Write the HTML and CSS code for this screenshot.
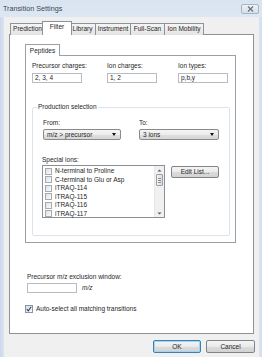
FILE: index.html
```html
<!DOCTYPE html>
<html>
<head>
<meta charset="utf-8">
<link rel="stylesheet" href="styles.css">
</head>
<body>
<div class="window">
  <div class="titlebar">
    <span class="title">Transition Settings</span>
    <span class="close"><svg width="7" height="6" viewBox="0 0 7 6"><path d="M1 0.5 L6 5.5 M6 0.5 L1 5.5" stroke="#6a7585" stroke-width="1.3"/></svg></span>
  </div>
  <div class="client">
    <div class="tabs">
      <div class="tab t-pred">Prediction</div>
      <div class="tab t-filter active">Filter</div>
      <div class="tab t-lib">Library</div>
      <div class="tab t-inst">Instrument</div>
      <div class="tab t-full">Full-Scan</div>
      <div class="tab t-ion">Ion Mobility</div>
    </div>
    <div class="panel">
      <div class="subtabs"><div class="subtab">Peptides</div></div>
      <div class="group">
        <div class="row3">
          <div class="field f1"><div class="lbl">Precursor charges:</div><div class="input">2, 3, 4</div></div>
          <div class="field f2"><div class="lbl">Ion charges:</div><div class="input">1, 2</div></div>
          <div class="field f3"><div class="lbl">Ion types:</div><div class="input">p,b,y</div></div>
        </div>
        <fieldset class="fs">
          <legend>Production selection</legend>
          <div class="row2">
            <div class="col c1"><div class="lbl">From:</div><div class="combo"><span>m/z &gt; precursor</span><i class="arrow"></i></div></div>
            <div class="col c2"><div class="lbl">To:</div><div class="combo"><span>3 ions</span><i class="arrow"></i></div></div>
          </div>
          <div class="lbl sp">Special ions:</div>
          <div class="listrow">
            <div class="listbox">
              <div class="items">
                <div class="item"><span class="cb"></span>N-terminal to Proline</div>
                <div class="item"><span class="cb"></span>C-terminal to Glu or Asp</div>
                <div class="item"><span class="cb"></span>iTRAQ-114</div>
                <div class="item"><span class="cb"></span>iTRAQ-115</div>
                <div class="item"><span class="cb"></span>iTRAQ-116</div>
                <div class="item"><span class="cb"></span>iTRAQ-117</div>
              </div>
              <div class="scroll">
                <svg class="sa" width="9" height="7" viewBox="0 0 9 7"><path d="M2.5 4.5 L4.5 2.5 L6.5 4.5Z" fill="#555"/></svg>
                <div class="thumb"><i></i><i></i><i></i></div>
                <div class="sfill"></div>
                <svg class="sa" width="9" height="7" viewBox="0 0 9 7"><path d="M2.5 2.5 L4.5 4.5 L6.5 2.5Z" fill="#555"/></svg>
              </div>
            </div>
            <div class="btn editbtn">Edit List...</div>
          </div>
        </fieldset>
      </div>
      <div class="lbl excl">Precursor m/z exclusion window:</div>
      <div class="exrow"><div class="input exin"></div><span class="unit">m/z</span></div>
      <div class="chkrow"><span class="chk"><svg width="6" height="6" viewBox="0 0 6 6"><path d="M0.8 3.2 L2.3 4.8 L5.2 0.8" stroke="#2a3f7a" stroke-width="1.1" fill="none"/></svg></span><span>Auto-select all matching transitions</span></div>
    </div>
    <div class="buttons">
      <div class="btn okbtn">OK</div>
      <div class="btn cancelbtn">Cancel</div>
    </div>
  </div>
</div>
</body>
</html>
```

FILE: styles.css
```css
* { box-sizing: border-box; }
html, body { margin: 0; padding: 0; }
body {
  font-family: "Liberation Sans", Arial, sans-serif;
  font-size: 6.5px;
  line-height: 8px;
  color: #262626;
}
.window {
  width: 262px;
  height: 357px;
  background: linear-gradient(90deg, #c9d8eb 0, #dbe5f1 4px, #dbe5f1 258px, #d3dfed 262px);
  display: flex;
  flex-direction: column;
  overflow: hidden;
}
.titlebar {
  height: 17px;
  flex: none;
  display: flex;
  align-items: center;
  padding-left: 3px;
  background: linear-gradient(#d9e4f1, #dde7f3);
  position: relative;
}
.title { font-size: 7.2px; color: #3b4756; }
.close {
  position: absolute;
  left: 241px;
  top: 4px;
  width: 18px;
  height: 10px;
  border: 1px solid #a8b4c4;
  border-radius: 2px;
  background: linear-gradient(#eef2f7, #d6dfe9);
  display: flex;
  align-items: center;
  justify-content: center;
}
.client {
  flex: 1;
  margin: 0 3px 0 4px;
  background: #f0f0f0;
  padding: 4px 5px 0 5px;
  display: flex;
  flex-direction: column;
}
.tabs {
  display: flex;
  align-items: flex-end;
  height: 14px;
  padding-left: 1px;
  position: relative;
  z-index: 1;
  margin-bottom: -1px;
}
.tab {
  height: 12px;
  border: 1px solid #8e9299;
  border-bottom: none;
  background: linear-gradient(#f4f4f4, #e4e4e4);
  display: flex;
  align-items: center;
  justify-content: center;
  margin-right: -1px;
  white-space: nowrap;
  padding-bottom: 1px;
}
.t-pred { width: 35px; }
.t-filter { width: 26px; }
.t-lib { width: 27px; }
.t-inst { width: 36px; }
.t-full { width: 35px; }
.t-ion { width: 40px; }
.tab.active {
  height: 14px;
  background: #fff;
  width: 30px;
  margin: 0 -3px 0 -2px;
  position: relative;
  z-index: 2;
  padding-bottom: 3px;
}
.panel {
  height: 300px;
  background: #fff;
  border: 1px solid #8e9299;
  padding: 9px 0 0 15px;
  display: flex;
  flex-direction: column;
}
.subtabs { display: flex; height: 11px; position: relative; z-index: 1; }
.subtab {
  width: 35px;
  height: 12px;
  border: 1px solid #9aa0a8;
  border-bottom: none;
  background: #fff;
  display: flex;
  align-items: center;
  justify-content: center;
  flex: none;
}
.group {
  width: 211px;
  height: 188px;
  border: 1px solid #9aa0a8;
  padding: 6px 0 0 6px;
  flex: none;
}
.row3 { display: flex; }
.field { display: flex; flex-direction: column; }
.f1 { width: 75px; }
.f2 { width: 71px; }
.f3 { width: 52px; }
.input {
  width: 50px;
  height: 10px;
  border: 1px solid #b7bcc4;
  background: #fff;
  margin-top: 3px;
  padding-left: 2px;
  display: flex;
  align-items: center;
}
.fs {
  margin: 20px 0 0 0;
  width: 198px;
  height: 133px;
  border: 1px solid #dde3ea;
  border-radius: 2px;
  padding: 8px 10px 0 10px;
}
.fs legend { padding: 0 1px; margin-left: -6px; line-height: 8px; }
.row2 { display: flex; gap: 18px; }
.col { display: flex; flex-direction: column; }
.c1 .combo { width: 78px; }
.c2 .combo { width: 80px; }
.combo {
  margin-top: 2px;
  height: 11px;
  border: 1px solid #8a8a8a;
  border-radius: 2px;
  background: linear-gradient(#f4f4f4 0, #ececec 50%, #dfdfdf 51%, #d6d6d6 100%);
  display: flex;
  align-items: center;
  justify-content: space-between;
  padding: 0 4px 0 3px;
}
.arrow {
  width: 0;
  height: 0;
  border-left: 2.5px solid transparent;
  border-right: 2.5px solid transparent;
  border-top: 3px solid #111;
}
.sp { margin-top: 16px; margin-left: -1px; }
.listrow { display: flex; gap: 6px; margin-top: 1px; margin-left: -1px; align-items: flex-start; }
.listbox {
  width: 123px;
  height: 53px;
  border: 1px solid #8a9099;
  display: flex;
  background: #fff;
}
.items { flex: 1; padding: 1px 0 0 2px; }
.item { display: flex; align-items: center; height: 8.5px; white-space: nowrap; }
.cb {
  width: 7px;
  height: 7px;
  border: 1px solid #a6abb1;
  background: linear-gradient(135deg, #dfe2e6, #fafafa);
  margin-right: 3px;
  flex: none;
}
.scroll {
  width: 10px;
  background: #f0f0f0;
  border-left: 1px solid #e8e8e8;
  display: flex;
  flex-direction: column;
  align-items: center;
}
.sa { flex: none; margin-top: 1px; }
.thumb {
  width: 7px;
  height: 12px;
  border: 1px solid #9aa0a8;
  border-radius: 1px;
  background: linear-gradient(90deg, #f3f3f3, #dcdcdc);
  display: flex;
  flex-direction: column;
  justify-content: center;
  align-items: center;
  gap: 1px;
}
.thumb i { width: 3px; height: 1px; background: #8b8f95; }
.sfill { flex: 1; }
.btn {
  border: 1px solid #7f838a;
  border-radius: 2px;
  background: linear-gradient(#f5f5f5 0, #eaeaea 50%, #dcdcdc 51%, #d2d2d2 100%);
  display: flex;
  align-items: center;
  justify-content: center;
}
.editbtn { width: 48px; height: 12px; margin-top: 1px; }
.excl { margin-top: 30px; margin-left: 2px; }
.exrow { display: flex; align-items: center; margin-left: 2px; }
.exin { margin-top: 2px; }
.unit { font-style: italic; margin-left: 5px; margin-top: 2px; }
.chkrow { display: flex; align-items: center; margin-top: 12px; }
.chk {
  width: 8px;
  height: 8px;
  border: 1px solid #8e959d;
  background: linear-gradient(135deg, #d8dde3, #f7f8f9);
  margin-right: 3px;
  display: flex;
  align-items: center;
  justify-content: center;
}
.buttons { display: flex; justify-content: flex-end; gap: 5px; margin-top: 6px; margin-right: -1px; }
.okbtn {
  width: 48px;
  height: 13px;
  border-color: #3c7fb1;
  box-shadow: inset 0 0 0 1px #9fd5f5;
}
.cancelbtn { width: 49px; height: 13px; }
```
